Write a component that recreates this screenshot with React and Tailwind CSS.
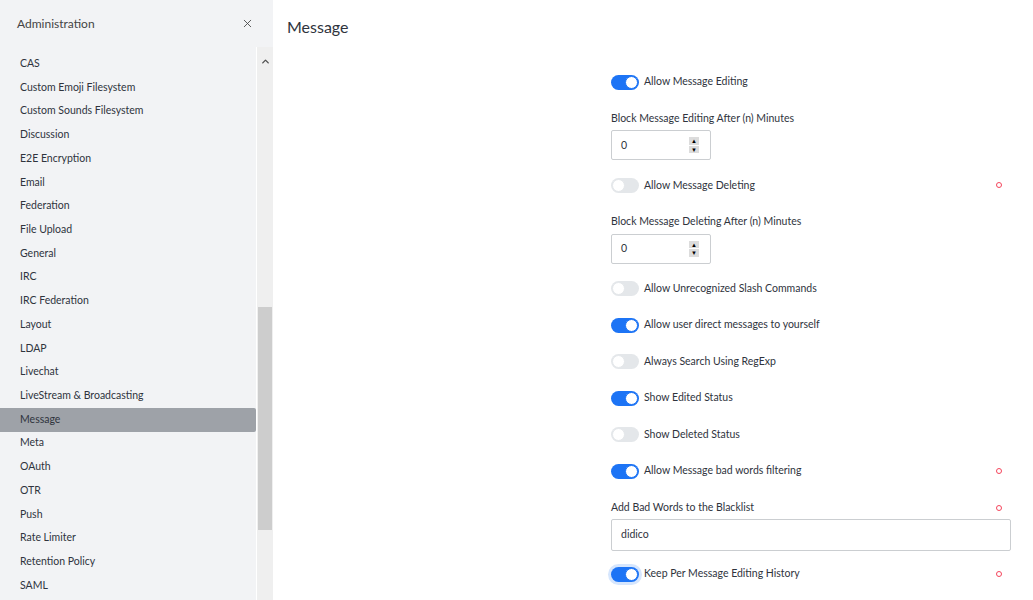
import { X, ChevronUp } from "lucide-react";

const groups = [
  "CAS",
  "Custom Emoji Filesystem",
  "Custom Sounds Filesystem",
  "Discussion",
  "E2E Encryption",
  "Email",
  "Federation",
  "File Upload",
  "General",
  "IRC",
  "IRC Federation",
  "Layout",
  "LDAP",
  "Livechat",
  "LiveStream & Broadcasting",
  "Message",
  "Meta",
  "OAuth",
  "OTR",
  "Push",
  "Rate Limiter",
  "Retention Policy",
  "SAML",
];

function Toggle({ on, focus }) {
  return (
    <span
      className={`relative inline-flex h-[15px] w-[28px] shrink-0 items-center rounded-full ${
        on ? "bg-[#1d74f5]" : "bg-[#e4e7ea]"
      } ${focus ? "ring-[3px] ring-[#d6e6fd]" : ""}`}
    >
      <span
        className={`absolute top-[1px] h-[13px] w-[13px] rounded-full bg-white ${
          on ? "left-[14px] border border-[#1d74f5]" : "left-[1px] border border-[#e4e7ea]"
        }`}
      />
    </span>
  );
}

function Dot() {
  return <span className="ml-auto mr-[9px] h-[6px] w-[6px] rounded-full border border-[#f5455c]" />;
}

function ToggleRow({ label, on, dot, focus, last }) {
  return (
    <div className={`flex h-4 items-center ${last ? "" : "mb-[20.45px]"}`}>
      <Toggle on={on} focus={focus} />
      <span className="ml-[5px] text-[#2f343d]">{label}</span>
      {dot && <Dot />}
    </div>
  );
}

function Spinner() {
  return (
    <span className="flex h-[16px] w-[10px] flex-col gap-[1px]">
      <span className="flex h-[7.5px] items-center justify-center bg-[#dcdcdc] text-[6px] leading-none text-black">▲</span>
      <span className="flex h-[7.5px] items-center justify-center bg-[#dcdcdc] text-[6px] leading-none text-black">▼</span>
    </span>
  );
}

function NumberField({ label }) {
  return (
    <div className="mb-[17px]">
      <div className="flex h-4 items-center text-[#2f343d]">{label}</div>
      <div className="mt-1 flex h-[30px] w-[100px] items-center rounded-[2px] border border-[#cbced1] pl-[9px] pr-[11px]">
        <span className="text-[#2f343d]">0</span>
        <span className="ml-auto">
          <Spinner />
        </span>
      </div>
    </div>
  );
}

export default function App() {
  return (
    <div className="flex h-[600px] w-[1033px] overflow-hidden bg-white text-[10.5px] font-['Lato',sans-serif]">
      {/* Sidebar */}
      <aside className="flex w-[273px] shrink-0 flex-col bg-[#f2f3f5]">
        <div className="flex h-[47px] items-center justify-between pl-[17px] pr-[19px]">
          <span className="text-[12px] text-[#444]">Administration</span>
          <X size={13} strokeWidth={1.6} className="text-[#444]" />
        </div>
        <div className="flex min-h-0 flex-1">
          <ul className="w-[256px] pt-[5px]">
            {groups.map((g) => (
              <li
                key={g}
                className={`flex h-[23.72px] items-center pl-5 text-[#2f343d] ${
                  g === "Message" ? "rounded-r-[2px] bg-[#9ea2a8]" : ""
                }`}
              >
                {g}
              </li>
            ))}
          </ul>
          <div className="flex w-[17px] flex-col border-l border-white bg-[#efefef]">
            <div className="flex h-[20px] items-end justify-center">
              <ChevronUp size={11} strokeWidth={3} className="text-[#505050]" />
            </div>
            <div className="mx-[1px] mt-[240px] h-[223px] bg-[#cdcdcd]" />
          </div>
        </div>
      </aside>

      {/* Main */}
      <main className="flex-1">
        <div className="flex h-[53px] items-center pl-[14px]">
          <h1 className="text-[16px] text-[#2f343d]">Message</h1>
        </div>
        <div className="ml-[338px] w-[400px] pt-[21px]">
          <ToggleRow label="Allow Message Editing" on />
          <NumberField label="Block Message Editing After (n) Minutes" />
          <ToggleRow label="Allow Message Deleting" dot />
          <NumberField label="Block Message Deleting After (n) Minutes" />
          <ToggleRow label="Allow Unrecognized Slash Commands" />
          <ToggleRow label="Allow user direct messages to yourself" on />
          <ToggleRow label="Always Search Using RegExp" />
          <ToggleRow label="Show Edited Status" on />
          <ToggleRow label="Show Deleted Status" />
          <ToggleRow label="Allow Message bad words filtering" on dot />
          <div className="mb-[15.5px]">
            <div className="flex h-4 items-center text-[#2f343d]">
              Add Bad Words to the Blacklist
              <Dot />
            </div>
            <div className="mt-[3px] flex h-[32px] items-center rounded-[2px] border border-[#cbced1] pl-[9px] text-[#2f343d]">
              didico
            </div>
          </div>
          <ToggleRow label="Keep Per Message Editing History" on dot focus last />
        </div>
      </main>
    </div>
  );
}
